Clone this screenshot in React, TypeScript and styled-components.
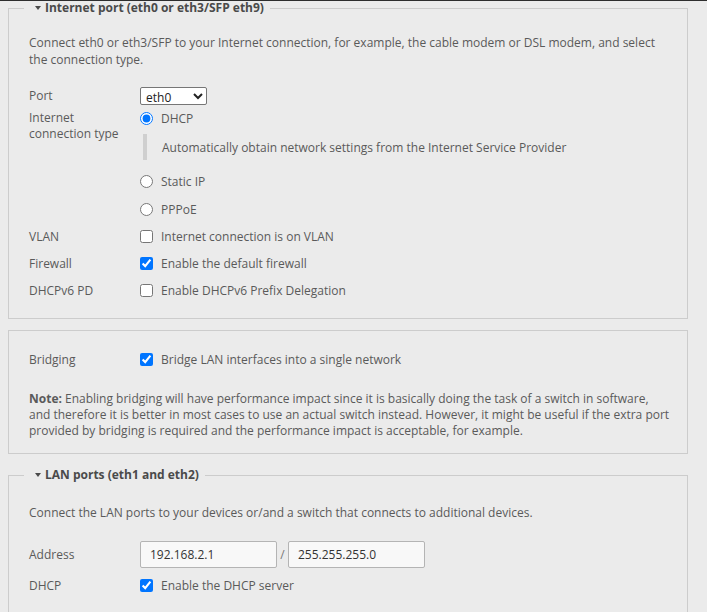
import styled, { createGlobalStyle } from 'styled-components';

const GlobalStyle = createGlobalStyle`
  html, body {
    margin: 0;
    padding: 0;
    background: #ebebeb;
  }
  body {
    font-family: "Open Sans", "Liberation Sans", sans-serif;
    font-size: 12px;
    color: #5a5a5a;
  }
`;

const Page = styled.div`
  border-top: 1px solid #2e2e2e;
  padding: 1px 19px 20px 8px;
`;

const Fieldset = styled.fieldset<{ $gap?: number; $top?: number }>`
  margin: ${({ $gap }) => $gap ?? 0}px 0 0 0;
  padding: ${({ $top }) => $top ?? 20}px 20px 14px 20px;
  border: 1px solid #cccccc;
  min-inline-size: 0;
`;

const Legend = styled.legend`
  margin-left: -5px;
  padding: 0 6px 0 11px;
  line-height: 12px;
  font-weight: 700;
  color: #4a4a4a;
  display: flex;
  align-items: center;
`;

const Caret = styled.span`
  display: inline-block;
  width: 0;
  height: 0;
  border-left: 3.5px solid transparent;
  border-right: 3.5px solid transparent;
  border-top: 4px solid #4a4a4a;
  margin-right: 4px;
`;

const Panel = styled.div`
  margin-top: 11px;
  padding: 15px 16px 14px 20px;
  border: 1px solid #cccccc;
`;

const Intro = styled.p<{ $after: number }>`
  margin: 0 0 ${({ $after }) => $after}px 0;
  line-height: 17px;
`;

const Note = styled.p`
  margin: 18px 0 0 0;
  line-height: 16px;
`;

const Row = styled.div<{ $h: number; $gap?: number }>`
  display: flex;
  align-items: center;
  min-height: ${({ $h }) => $h}px;
  margin-top: ${({ $gap }) => $gap ?? 0}px;
`;

const TopRow = styled.div`
  display: flex;
  align-items: flex-start;
`;

const Label = styled.div<{ $top?: number }>`
  width: 111px;
  flex: none;
  line-height: 16px;
  padding-top: ${({ $top }) => $top ?? 0}px;
`;

const Field = styled.div`
  display: flex;
  flex-direction: column;
`;

const Option = styled.label<{ $h: number }>`
  display: flex;
  align-items: center;
  height: ${({ $h }) => $h}px;
`;

const Check = styled.input`
  width: 13px;
  height: 13px;
  margin: 0 8px 0 0;
`;

const Hint = styled.div`
  margin: 2px 0 7px 3px;
  height: 26px;
  border-left: 4px solid #cfcfcf;
  padding-left: 15px;
  display: flex;
  align-items: center;
`;

const Select = styled.select`
  width: 67px;
  height: 18px;
  padding: 0 0 0 1px;
  font-family: "Open Sans", "Liberation Sans", sans-serif;
  font-size: 12px;
  color: #222;
  background: #ffffff;
  border: 1px solid #767676;
  border-radius: 2px;
`;

const TextInput = styled.input`
  box-sizing: border-box;
  width: 137px;
  height: 27px;
  padding: 0 9px;
  font-family: "Open Sans", "Liberation Sans", sans-serif;
  font-size: 12px;
  color: #333;
  background: #f8f8f8;
  border: 1px solid #b4b4b4;
  border-radius: 2px;
`;

const Slash = styled.span`
  width: 11px;
  text-align: center;
  color: #777;
`;

export default function App() {
  return (
    <>
      <GlobalStyle />
      <Page>
        <Fieldset>
          <Legend>
            <Caret />
            Internet port (eth0 or eth3/SFP eth9)
          </Legend>
          <Intro $after={19}>
            Connect eth0 or eth3/SFP to your Internet connection, for example, the cable modem or DSL modem, and
            select the connection type.
          </Intro>
          <Row $h={18}>
            <Label>Port</Label>
            <Select defaultValue="eth0">
              <option value="eth0">eth0</option>
              <option value="eth3">eth3/SFP</option>
            </Select>
          </Row>
          <TopRow>
            <Label $top={5}>
              Internet
              <br />
              connection type
            </Label>
            <Field>
              <Option $h={27}>
                <Check type="radio" name="wan" defaultChecked />
                DHCP
              </Option>
              <Hint>Automatically obtain network settings from the Internet Service Provider</Hint>
              <Option $h={28}>
                <Check type="radio" name="wan" />
                Static IP
              </Option>
              <Option $h={28}>
                <Check type="radio" name="wan" />
                PPPoE
              </Option>
            </Field>
          </TopRow>
          <Row $h={27}>
            <Label>VLAN</Label>
            <Option $h={27}>
              <Check type="checkbox" />
              Internet connection is on VLAN
            </Option>
          </Row>
          <Row $h={27}>
            <Label>Firewall</Label>
            <Option $h={27}>
              <Check type="checkbox" defaultChecked />
              Enable the default firewall
            </Option>
          </Row>
          <Row $h={27}>
            <Label>DHCPv6 PD</Label>
            <Option $h={27}>
              <Check type="checkbox" />
              Enable DHCPv6 Prefix Delegation
            </Option>
          </Row>
        </Fieldset>

        <Panel>
          <Row $h={27}>
            <Label>Bridging</Label>
            <Option $h={27}>
              <Check type="checkbox" defaultChecked />
              Bridge LAN interfaces into a single network
            </Option>
          </Row>
          <Note>
            <b>Note:</b> Enabling bridging will have performance impact since it is basically doing the task of a
            switch in software, and therefore it is better in most cases to use an actual switch instead. However, it
            might be useful if the extra port provided by bridging is required and the performance impact is
            acceptable, for example.
          </Note>
        </Panel>

        <Fieldset $gap={15} $top={23}>
          <Legend>
            <Caret />
            LAN ports (eth1 and eth2)
          </Legend>
          <Intro $after={20}>
            Connect the LAN ports to your devices or/and a switch that connects to additional devices.
          </Intro>
          <Row $h={27}>
            <Label>Address</Label>
            <TextInput defaultValue="192.168.2.1" />
            <Slash>/</Slash>
            <TextInput defaultValue="255.255.255.0" />
          </Row>
          <Row $h={27} $gap={4}>
            <Label>DHCP</Label>
            <Option $h={27}>
              <Check type="checkbox" defaultChecked />
              Enable the DHCP server
            </Option>
          </Row>
        </Fieldset>
      </Page>
    </>
  );
}
